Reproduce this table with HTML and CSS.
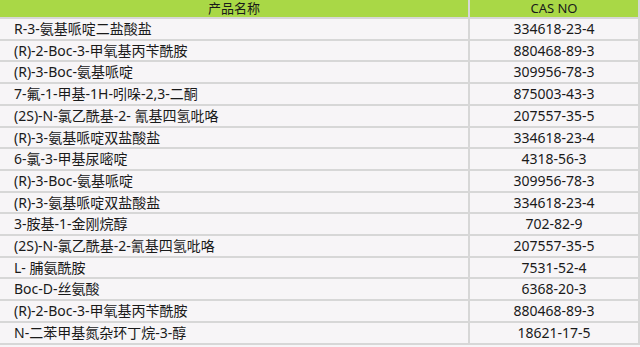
FILE: index.html
```html
<!DOCTYPE html>
<html lang="zh">
<head>
<meta charset="utf-8">
<title>产品列表</title>
<link rel="stylesheet" href="styles.css">
</head>
<body>
<table class="products">
  <thead>
    <tr><th class="name">产品名称</th><th class="cas">CAS NO</th></tr>
  </thead>
  <tbody>
    <tr><td class="name">R-3-氨基哌啶二盐酸盐</td><td class="cas">334618-23-4</td></tr>
    <tr><td class="name">(R)-2-Boc-3-甲氧基丙苄酰胺</td><td class="cas">880468-89-3</td></tr>
    <tr><td class="name">(R)-3-Boc-氨基哌啶</td><td class="cas">309956-78-3</td></tr>
    <tr><td class="name">7-氟-1-甲基-1H-吲哚-2,3-二酮</td><td class="cas">875003-43-3</td></tr>
    <tr><td class="name">(2S)-N-氯乙酰基-2- 氰基四氢吡咯</td><td class="cas">207557-35-5</td></tr>
    <tr><td class="name">(R)-3-氨基哌啶双盐酸盐</td><td class="cas">334618-23-4</td></tr>
    <tr><td class="name">6-氯-3-甲基尿嘧啶</td><td class="cas">4318-56-3</td></tr>
    <tr><td class="name">(R)-3-Boc-氨基哌啶</td><td class="cas">309956-78-3</td></tr>
    <tr><td class="name">(R)-3-氨基哌啶双盐酸盐</td><td class="cas">334618-23-4</td></tr>
    <tr><td class="name">3-胺基-1-金刚烷醇</td><td class="cas">702-82-9</td></tr>
    <tr><td class="name">(2S)-N-氯乙酰基-2-氰基四氢吡咯</td><td class="cas">207557-35-5</td></tr>
    <tr><td class="name">L- 脯氨酰胺</td><td class="cas">7531-52-4</td></tr>
    <tr><td class="name">Boc-D-丝氨酸</td><td class="cas">6368-20-3</td></tr>
    <tr><td class="name">(R)-2-Boc-3-甲氧基丙苄酰胺</td><td class="cas">880468-89-3</td></tr>
    <tr><td class="name">N-二苯甲基氮杂环丁烷-3-醇</td><td class="cas">18621-17-5</td></tr>
  </tbody>
</table>
</body>
</html>
```
FILE: styles.css
```css
html, body {
  margin: 0;
  padding: 0;
  background: #f7f5f7;
  overflow: hidden;
}

.products {
  margin: -2px 0 0 -2px;
  width: 642px;
  border-collapse: separate;
  border-spacing: 2px;
  background: #d7d7d7;
  font-family: "Noto Sans", "Noto Sans CJK SC", sans-serif;
  color: #1a1a1a;
  table-layout: fixed;
}

.products th,
.products td {
  padding: 0;
  background: #f7f5f7;
  font-weight: normal;
  white-space: nowrap;
}

.products th {
  background: #a9d846;
  height: 17px;
  line-height: 17px;
  font-size: 13px;
  text-align: center;
}

.products td {
  height: 19.7px;
  line-height: 19.7px;
  font-size: 14px;
}

.products th.name {
  width: 468px;
}

.products td.name {
  text-align: left;
  padding-left: 14px;
}

.products td.cas {
  text-align: center;
}
```
